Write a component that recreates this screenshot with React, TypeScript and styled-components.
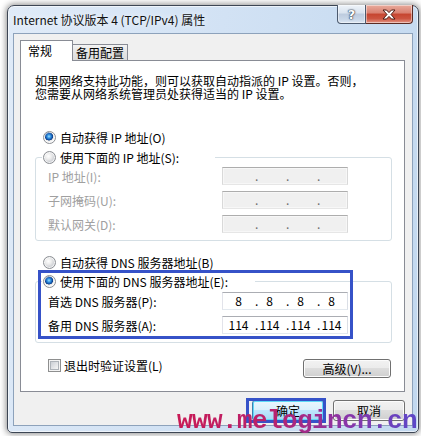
import { Fragment } from "react";
import styled, { createGlobalStyle } from "styled-components";

const ui = `"Noto Sans CJK SC", "Noto Sans", sans-serif`;
const annot = "#3652c8";

const GlobalStyle = createGlobalStyle`
  html, body {
    margin: 0;
    padding: 0;
    background: #ffffff;
  }
  body {
    font-family: ${ui};
    font-size: 12px;
    color: #000;
  }
`;

const Page = styled.div`
  position: relative;
  box-sizing: border-box;
  width: 421px;
  height: 436px;
  padding: 5px 0 0 7px;
  overflow: hidden;
`;

const Window = styled.div`
  box-sizing: border-box;
  width: 412px;
  height: 428px;
  border: 1px solid #3d4654;
  border-radius: 7px 7px 5px 5px;
  padding: 0 5px 6px 5px;
  background: linear-gradient(100deg, #e0ebf8 0%, #d2e2f4 45%, #c2d8ef 100%);
  box-shadow: 0 0 6px 1px rgba(0, 0, 0, 0.45),
    inset 0 0 0 1px rgba(255, 255, 255, 0.6);
  display: flex;
  flex-direction: column;
`;

const TitleBar = styled.div`
  height: 27px;
  display: flex;
  align-items: flex-start;
`;

const Title = styled.div`
  flex: 1;
  line-height: 27px;
  font-size: 12px;
  color: #111;
  text-shadow: 0 0 6px rgba(255, 255, 255, 0.95);
  white-space: nowrap;
`;

const CaptionGroup = styled.div`
  display: flex;
  margin-top: -1px;
`;

const CaptionButton = styled.div<{ $close?: boolean }>`
  box-sizing: border-box;
  width: ${(p) => (p.$close ? 47 : 29)}px;
  height: 19px;
  display: flex;
  align-items: center;
  justify-content: center;
  border: 1px solid ${(p) => (p.$close ? "#5b2a22" : "#4c5a6e")};
  border-top: none;
  border-left: ${(p) => (p.$close ? "none" : undefined)};
  border-radius: ${(p) => (p.$close ? "0 0 4px 0" : "0 0 0 4px")};
  background: ${(p) =>
    p.$close
      ? "linear-gradient(#e9ab9d 0%, #d98070 45%, #c64530 50%, #cc5440 75%, #e49585 100%)"
      : "linear-gradient(#eef3f9 0%, #d9e3ef 45%, #bccbde 50%, #c9d7e8 80%, #dce6f2 100%)"};
  box-shadow: inset 0 0 0 1px rgba(255, 255, 255, 0.45);
`;

const HelpGlyph = styled.span`
  font-family: "DejaVu Sans", sans-serif;
  font-weight: bold;
  font-size: 13px;
  line-height: 13px;
  color: #fff;
  text-shadow: 0 0 1px #2c3a4e, 0 0 1px #2c3a4e, 0 0 2px #2c3a4e;
`;

const Client = styled.div`
  flex: 1;
  border: 1px solid #8da2bb;
  background: #f0f0f0;
  padding: 6px 7px 4px 6px;
  display: flex;
  flex-direction: column;
`;

const TabStrip = styled.div`
  height: 20px;
  display: flex;
  align-items: flex-end;
  position: relative;
  z-index: 1;
`;

const Tab = styled.div<{ $active?: boolean }>`
  box-sizing: border-box;
  height: ${(p) => (p.$active ? 21 : 16)}px;
  width: ${(p) => (p.$active ? 53 : 56)}px;
  margin-bottom: ${(p) => (p.$active ? -1 : 0)}px;
  margin-left: ${(p) => (p.$active ? 0 : -1)}px;
  padding-left: ${(p) => (p.$active ? 7 : 3)}px;
  border: 1px solid #898c95;
  border-bottom: none;
  background: ${(p) =>
    p.$active ? "#ffffff" : "linear-gradient(#f4f4f4, #e4e4e4 50%, #dcdcdc)"};
  position: relative;
  z-index: ${(p) => (p.$active ? 2 : 1)};
  display: flex;
  align-items: center;
  padding-bottom: ${(p) => (p.$active ? 1 : 0)}px;
  font-size: 12px;
`;

const Panel = styled.div`
  position: relative;
  box-sizing: border-box;
  height: 332px;
  border: 1px solid #898c95;
  background: #ffffff;
  padding: 13px 12px 0 14px;
  display: flex;
  flex-direction: column;
`;

const Description = styled.div`
  display: flex;
  flex-direction: column;
`;

const DescLine = styled.span`
  height: 13px;
  line-height: 13px;
  white-space: nowrap;
`;

const RadioRow = styled.label<{ $top: number }>`
  display: flex;
  align-items: center;
  gap: 4px;
  height: 16px;
  margin: ${(p) => p.$top}px 0 0 8px;
  white-space: nowrap;
`;

const RadioMark = styled.span<{ $checked?: boolean }>`
  box-sizing: border-box;
  flex: none;
  width: 13px;
  height: 13px;
  border-radius: 50%;
  border: 1px solid #8c8f94;
  background: ${(p) =>
    p.$checked
      ? "radial-gradient(circle at 45% 40%, #9fe0ff 0, #3b9be6 1.6px, #0e4fa6 3.4px, #0b3b80 3.9px, #e2e2e2 4.3px, #f6f6f6 5.5px)"
      : "radial-gradient(circle at 40% 38%, #ffffff 0, #ececec 3px, #d2d4d8 5.5px)"};
  box-shadow: inset 0 0 0 1px rgba(255, 255, 255, 0.7);
`;

const Group = styled.fieldset<{ $padTop: number; $padBottom: number; $top: number }>`
  margin: ${(p) => p.$top}px 0 0 0;
  min-width: 0;
  border: 1px solid #d5dfe5;
  border-radius: 3px;
  padding: ${(p) => p.$padTop}px 0 ${(p) => p.$padBottom}px 6px;
`;

const Legend = styled.legend<{ $w: number }>`
  box-sizing: border-box;
  width: ${(p) => p.$w}px;
  height: 16px;
  padding: 0 0 0 1px;
  display: flex;
  align-items: center;
  gap: 4px;
  white-space: nowrap;
`;

const Fields = styled.div`
  margin-left: 6px;
  display: grid;
  grid-template-columns: 174px 126px;
  grid-auto-rows: 18px;
  row-gap: 6px;
  align-items: center;
`;

const FieldLabel = styled.span<{ $disabled?: boolean }>`
  color: ${(p) => (p.$disabled ? "#a0a0a0" : "#000")};
  white-space: nowrap;
`;

const IpBox = styled.div<{ $disabled?: boolean }>`
  box-sizing: border-box;
  width: 126px;
  height: 18px;
  border: 1px solid;
  border-color: ${(p) =>
    p.$disabled
      ? "#adadad #d9d9d9 #e6e6e6 #d9d9d9"
      : "#abadb3 #dbdfe6 #e3e9ef #e2e3ea"};
  background: ${(p) => (p.$disabled ? "#f0f0f0" : "#ffffff")};
  box-shadow: ${(p) => (p.$disabled ? "inset 0 0 0 1px #f7f7f7" : "none")};
  display: grid;
  grid-template-columns: repeat(4, 31px);
  color: ${(p) => (p.$disabled ? "#6d6d6d" : "#000")};
`;

const Segment = styled.div`
  display: grid;
  align-items: center;
  line-height: 16px;
  & > * {
    grid-area: 1 / 1;
  }
`;

const SegNum = styled.span`
  justify-self: center;
`;

const SegDot = styled.span`
  justify-self: start;
  padding-left: 1px;
`;

const BottomRow = styled.div`
  margin: 16px 1px 0 13px;
  display: flex;
  align-items: flex-start;
  justify-content: space-between;
`;

const CheckRow = styled.label`
  display: flex;
  align-items: center;
  gap: 3px;
  height: 13px;
  white-space: nowrap;
`;

const CheckMark = styled.span`
  box-sizing: border-box;
  flex: none;
  width: 13px;
  height: 13px;
  border: 1px solid #8e8f8f;
  background: #f4f4f4;
  padding: 1px;
  &::after {
    content: "";
    display: block;
    box-sizing: border-box;
    width: 100%;
    height: 100%;
    border: 1px solid #aeb3b9;
    background: linear-gradient(135deg, #cbcfd5, #f6f6f6);
  }
`;

const Button = styled.button<{ $default?: boolean; $w: number; $h: number }>`
  position: relative;
  box-sizing: border-box;
  width: ${(p) => p.$w}px;
  height: ${(p) => p.$h}px;
  padding: 0;
  font-family: ${ui};
  font-size: 12px;
  color: #000;
  border: 1px solid ${(p) => (p.$default ? "#3c7fb1" : "#707070")};
  border-radius: 3px;
  background: ${(p) =>
    p.$default
      ? "linear-gradient(#eaf6fd 0%, #d9f0fc 50%, #bee6fd 50%, #a7d9f5 100%)"
      : "linear-gradient(#f2f2f2 0%, #ebebeb 50%, #dddddd 50%, #cfcfcf 100%)"};
  box-shadow: inset 0 0 0 1px ${(p) => (p.$default ? "#5fdaf7" : "#fcfcfc")};
  line-height: 1;
`;

const ButtonBar = styled.div`
  margin-top: 8px;
  display: flex;
  justify-content: flex-end;
  gap: 9px;
`;

const Highlight = styled.span<{ $l: number; $t: number; $r: number; $b: number }>`
  position: absolute;
  left: ${(p) => p.$l}px;
  top: ${(p) => p.$t}px;
  right: ${(p) => p.$r}px;
  bottom: ${(p) => p.$b}px;
  border: 3px solid ${annot};
  pointer-events: none;
`;

const DnsHighlight = styled.span`
  position: absolute;
  left: 17px;
  top: 209px;
  width: 315px;
  height: 69px;
  box-sizing: border-box;
  border: 3px solid ${annot};
  pointer-events: none;
`;

const Watermark = styled.div`
  position: absolute;
  left: 177px;
  top: 408px;
  font-family: "Liberation Mono", monospace;
  font-weight: bold;
  font-size: 26px;
  line-height: 26px;
  letter-spacing: -0.6px;
  white-space: nowrap;
  background: linear-gradient(90deg, #c81a55 0%, #b8226e 40%, #8a34a8 70%, #5c48c8 100%);
  -webkit-background-clip: text;
  background-clip: text;
  color: transparent;
  pointer-events: none;
`;

type Ip = string[] | null;

const IpField = ({ value, disabled }: { value: Ip; disabled?: boolean }) => (
  <IpBox $disabled={disabled}>
    {[0, 1, 2, 3].map((i) => (
      <Segment key={i}>
        {i > 0 && <SegDot>.</SegDot>}
        <SegNum>{value ? value[i] : ""}</SegNum>
      </Segment>
    ))}
  </IpBox>
);

const ipRows = ["IP 地址(I):", "子网掩码(U):", "默认网关(D):"];
const dnsRows: { label: string; value: string[] }[] = [
  { label: "首选 DNS 服务器(P):", value: ["8", "8", "8", "8"] },
  { label: "备用 DNS 服务器(A):", value: ["114", "114", "114", "114"] },
];

const CloseIcon = () => (
  <svg width="14" height="11" viewBox="0 0 14 11">
    <path
      d="M1 1 H4.5 L7 3.6 L9.5 1 H13 L9 5.5 L13 10 H9.5 L7 7.4 L4.5 10 H1 L5 5.5 Z"
      fill="#ffffff"
      stroke="#4a1a12"
      strokeWidth="1"
      strokeLinejoin="round"
    />
  </svg>
);

export default function App() {
  return (
    <Page>
      <GlobalStyle />
      <Window>
        <TitleBar>
          <Title>Internet 协议版本 4 (TCP/IPv4) 属性</Title>
          <CaptionGroup>
            <CaptionButton>
              <HelpGlyph>?</HelpGlyph>
            </CaptionButton>
            <CaptionButton $close>
              <CloseIcon />
            </CaptionButton>
          </CaptionGroup>
        </TitleBar>
        <Client>
          <TabStrip>
            <Tab $active>常规</Tab>
            <Tab>备用配置</Tab>
          </TabStrip>
          <Panel>
            <Description>
              <DescLine>如果网络支持此功能，则可以获取自动指派的 IP 设置。否则，</DescLine>
              <DescLine>您需要从网络系统管理员处获得适当的 IP 设置。</DescLine>
            </Description>

            <RadioRow $top={29}>
              <RadioMark $checked />
              自动获得 IP 地址(O)
            </RadioRow>
            <Group $top={4} $padTop={2} $padBottom={7}>
              <Legend $w={173}>
                <RadioMark />
                使用下面的 IP 地址(S):
              </Legend>
              <Fields>
                {ipRows.map((label) => (
                  <Fragment key={label}>
                    <FieldLabel $disabled>{label}</FieldLabel>
                    <IpField value={null} disabled />
                  </Fragment>
                ))}
              </Fields>
            </Group>

            <RadioRow $top={13}>
              <RadioMark />
              自动获得 DNS 服务器地址(B)
            </RadioRow>
            <Group $top={3} $padTop={3} $padBottom={8}>
              <Legend $w={213}>
                <RadioMark $checked />
                使用下面的 DNS 服务器地址(E):
              </Legend>
              <Fields>
                {dnsRows.map((row) => (
                  <Fragment key={row.label}>
                    <FieldLabel>{row.label}</FieldLabel>
                    <IpField value={row.value} />
                  </Fragment>
                ))}
              </Fields>
            </Group>

            <BottomRow>
              <CheckRow>
                <CheckMark />
                退出时验证设置(L)
              </CheckRow>
              <Button $w={88} $h={19}>
                高级(V)...
              </Button>
            </BottomRow>

            <DnsHighlight />
          </Panel>
          <ButtonBar>
            <Button $default $w={72} $h={21}>
              确定
              <Highlight $l={-7} $t={-3} $r={-3} $b={-3} />
            </Button>
            <Button $w={72} $h={21}>
              取消
            </Button>
          </ButtonBar>
        </Client>
      </Window>
      <Watermark>www.melogincn.cn</Watermark>
    </Page>
  );
}
